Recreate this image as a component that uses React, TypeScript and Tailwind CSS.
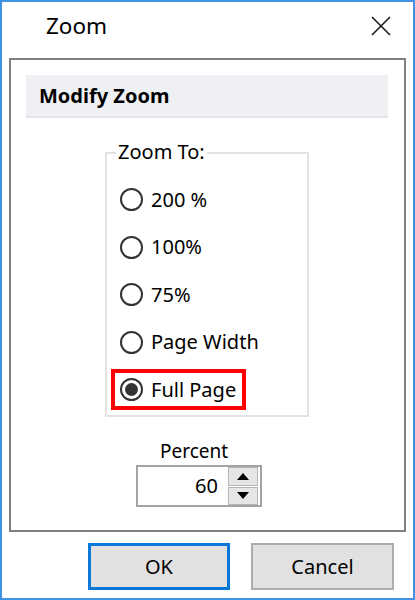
import { useState } from "react"

const options = ["200 %", "100%", "75%", "Page Width", "Full Page"]

function Radio({ checked }: { checked: boolean }) {
  return (
    <span className="flex h-[23px] w-[23px] shrink-0 items-center justify-center rounded-full border-2 border-[#333333] bg-white">
      {checked && <span className="h-[13px] w-[13px] rounded-full bg-[#333333]" />}
    </span>
  )
}

export default function App() {
  const [selected, setSelected] = useState("Full Page")

  return (
    <div
      className="flex h-[600px] w-[415px] flex-col border-2 border-[#3f93e0] bg-white text-black"
      style={{ fontFamily: '"Noto Sans", "Open Sans", sans-serif' }}
    >
      {/* title bar */}
      <div className="flex h-[56px] shrink-0 items-center justify-between pb-[9px] pl-[44px] pr-[22px]">
        <span className="text-[22.5px] leading-[30px]">Zoom</span>
        <svg width="20" height="20" viewBox="0 0 20 20" className="text-[#1a1a1a]">
          <path d="M1 1 L19 19 M19 1 L1 19" stroke="currentColor" strokeWidth="1.6" fill="none" />
        </svg>
      </div>

      {/* content panel */}
      <div className="ml-[7px] flex h-[474px] w-[397px] shrink-0 flex-col border-2 border-[#7f7f7f]">
        <div className="ml-[15px] mt-[15px] flex h-[43px] w-[362px] items-center border-b-2 border-[#e4e5ea] bg-[#eff0f4] pl-[13px]">
          <span className="text-[20px] font-bold leading-[24px]">Modify Zoom</span>
        </div>

        <div className="relative ml-[94px] mt-[34px] h-[265px] w-[204px] border-2 border-[#e2e2e2] pl-[13px] pt-[22px]">
          <span className="absolute -top-[12px] left-[9px] bg-white px-[2px] text-[20px] leading-[20px]">Zoom To:</span>
          {options.map((o) => {
            const checked = o === selected
            const label = (
              <>
                <Radio checked={checked} />
                <span className="text-[20px] leading-[24px]">{o}</span>
              </>
            )
            return (
              <div key={o} className="flex h-[47.5px] items-center" onClick={() => setSelected(o)}>
                {o === "Full Page" ? (
                  <div className="-ml-[9px] flex h-[41px] w-[135px] items-center gap-[8px] border-4 border-[#ff0000] pl-[5px]">
                    {label}
                  </div>
                ) : (
                  <div className="flex items-center gap-[8px]">{label}</div>
                )}
              </div>
            )
          })}
        </div>

        <div className="ml-[149px] mt-[22px] text-[19px] leading-[24px]">Percent</div>
        <div className="ml-[125px] mt-[2px] flex h-[42px] w-[126px] items-center border-2 border-[#a3a3a3]">
          <span className="flex-1 pr-[10px] text-right text-[20px] leading-[24px]">60</span>
          <div className="mr-[2px] flex h-[38px] w-[30px] flex-col gap-[1px]">
            <div className="flex flex-1 items-center justify-center border border-[#b5b5b5] bg-[#e6e6e6]">
              <svg width="12" height="7" viewBox="0 0 12 7">
                <path d="M0 7 L6 0 L12 7 Z" fill="#000" />
              </svg>
            </div>
            <div className="flex flex-1 items-center justify-center border border-[#b5b5b5] bg-[#e6e6e6]">
              <svg width="12" height="7" viewBox="0 0 12 7">
                <path d="M0 0 L12 0 L6 7 Z" fill="#000" />
              </svg>
            </div>
          </div>
        </div>
      </div>

      {/* buttons */}
      <div className="ml-[86px] mt-[11px] flex gap-[21px]">
        <button className="h-[47px] w-[142px] border-[3px] border-[#0a78d8] bg-[#e1e1e1] text-[20px]">OK</button>
        <button className="h-[47px] w-[143px] border-2 border-[#adadad] bg-[#e1e1e1] text-[20px]">Cancel</button>
      </div>
    </div>
  )
}
